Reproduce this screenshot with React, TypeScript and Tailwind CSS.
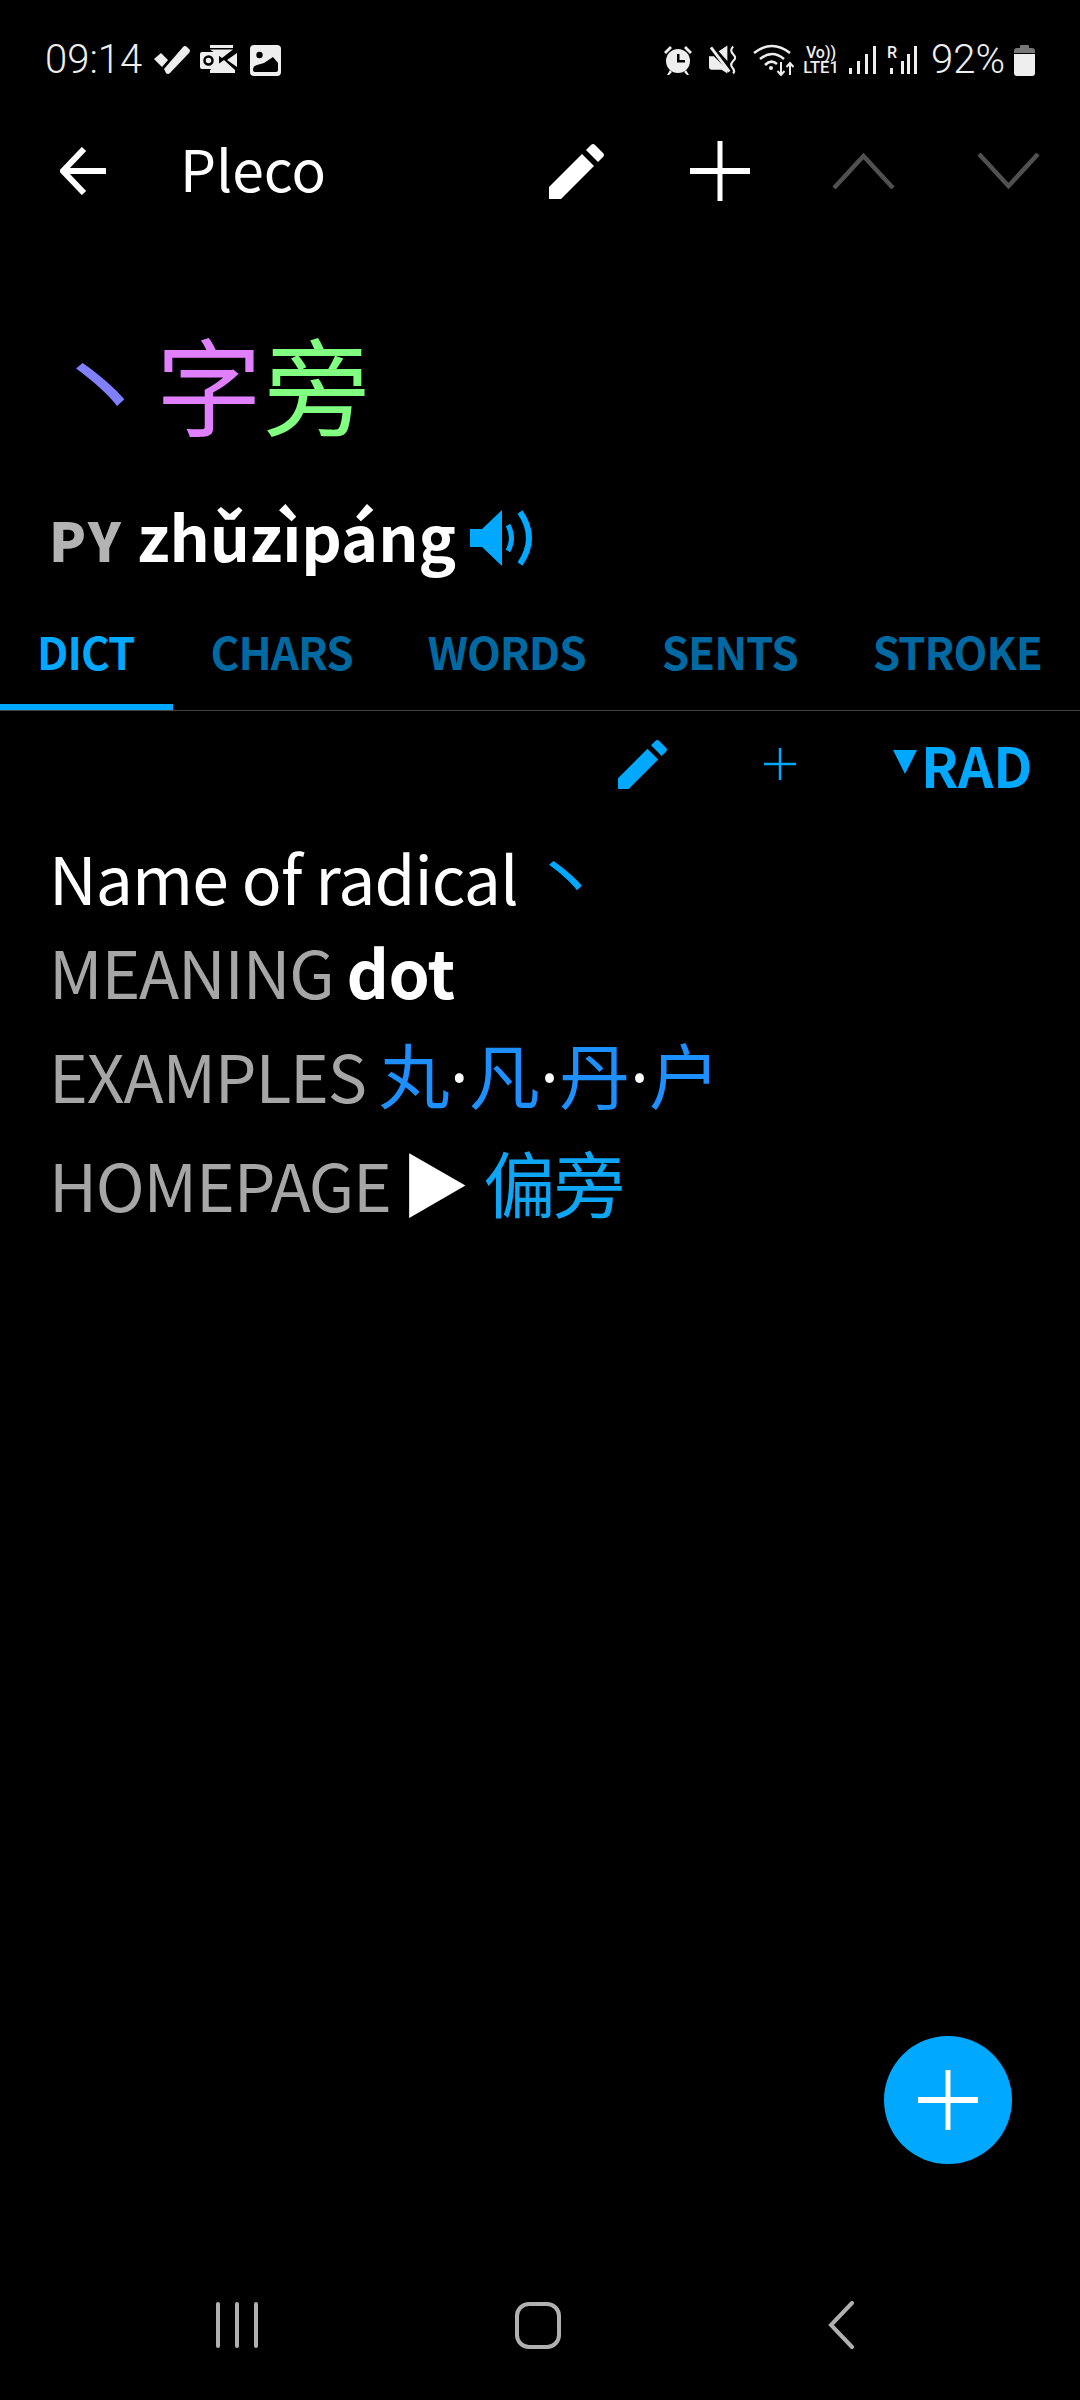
const sans = "font-['Noto_Sans_CJK_SC',sans-serif]";

const Pencil = ({ className }: { className: string }) => (
  <svg viewBox="0 0 56 56" className={className} fill="currentColor">
    <path d="M0 44 L33 11 L45 23 L12 56 L0 56 Z" />
    <path d="M37 7 L42 2 Q44 0 46 2 L54 10 Q56 12 54 14 L49 19 Z" />
  </svg>
);

const StatusLeft = () => (
  <div className="flex items-center">
    <span className="font-['Roboto',sans-serif] font-light text-[40px] leading-none text-[#eeeeee] w-[96px]">09:14</span>
    <svg viewBox="0 0 36 30" className="ml-[13px] w-[36px] h-[30px]" fill="#eeeeee">
      <path d="M0 14 L7 8 L14 15 L8 22 Z" />
      <path d="M10 24 L29 2 Q31 0 33 2 L36 5 Q36 7 35 8 L16 28 Q14 30 12 28 Z" />
    </svg>
    <svg viewBox="0 0 37 30" className="ml-[10px] w-[37px] h-[30px]" fill="#eeeeee">
      <path d="M10 0 H33 V3 H10 Z M10 4.5 H33 L22 13 Z M27 15 L37 8 V22 Z M10 25 L24 15 L35 25 V28 H10 Z" />
      <rect x="0" y="7" width="19" height="17" rx="2" />
      <circle cx="8.5" cy="15.5" r="4" fill="none" stroke="#000" strokeWidth="2.5" />
    </svg>
    <svg viewBox="0 0 31 31" className="ml-[13px] w-[31px] h-[31px]">
      <rect width="31" height="31" rx="4" fill="#eeeeee" />
      <circle cx="9.5" cy="10" r="3.2" fill="#000" />
      <path d="M3 25 Q3 21 7 20 L14 18 L23 12 L28 18 V25 Q28 27 26 27 H5 Q3 27 3 25 Z" fill="#000" />
    </svg>
  </div>
);

const StatusRight = () => (
  <div className="flex items-center">
    <svg viewBox="0 0 30 30" className="w-[30px] h-[30px]" fill="#eeeeee">
      <path d="M1 7 L7 1 L9 3 L3 9 Z M29 7 L23 1 L21 3 L27 9 Z M4 30 L7 25 L9 27 L6 30 Z M26 30 L23 25 L21 27 L24 30 Z" />
      <circle cx="15" cy="16" r="12" />
      <path d="M14 9 H16.5 V15 H22 V17.5 H14 Z" fill="#000" />
    </svg>
    <svg viewBox="0 0 30 30" className="ml-[16px] w-[29px] h-[30px]" fill="#eeeeee">
      <path d="M0 11 H5 L19 25 V29 L13 25 H3 Q0 25 0 22 Z M10 6 L19 0 V16 Z" />
      <path d="M2 2 L21 27" stroke="#eeeeee" strokeWidth="3" />
      <path d="M25 1 Q21 5 25 9 Q29 13 25 16 Q21 20 25 24 Q27 27 25 29" stroke="#eeeeee" strokeWidth="2.2" fill="none" />
    </svg>
    <svg viewBox="0 0 42 32" className="ml-[15px] w-[42px] h-[32px]" fill="none" stroke="#eeeeee" strokeWidth="2.6">
      <path d="M1 9 Q19 -5 37 9" />
      <path d="M7 15 Q19 5 31 15" />
      <path d="M12 21 Q18 15 24 20" />
      <circle cx="18" cy="24" r="2" fill="#eeeeee" stroke="none" />
      <path d="M28 18 V31 M24.5 27 L28 31 L31.5 27 M37 31 V19 M33.5 23 L37 19 L40.5 23" strokeWidth="2" />
    </svg>
    <div className="ml-[7px] w-[38px] flex flex-col items-center font-['Roboto',sans-serif] font-medium text-[#eeeeee] leading-none">
      <span className="text-[16px] h-[15px]">Vo))</span>
      <span className="text-[16.5px] h-[16px]">LTE1</span>
    </div>
    <svg viewBox="0 0 28 30" className="ml-[9px] w-[28px] h-[30px]" fill="#eeeeee">
      <rect x="0" y="23" width="3" height="6" />
      <rect x="8" y="16" width="3" height="13" />
      <rect x="16" y="9" width="3" height="20" />
      <rect x="24" y="1" width="3" height="28" />
    </svg>
    <div className="relative ml-[10px] w-[30px] h-[30px]">
      <svg viewBox="0 0 30 30" className="w-[30px] h-[30px]" fill="#eeeeee">
        <rect x="3" y="23" width="3" height="6" />
        <rect x="14" y="16" width="3" height="13" />
        <rect x="20" y="9" width="3" height="20" />
        <rect x="27" y="1" width="3" height="28" />
      </svg>
      <span className="absolute left-0 top-0 font-['Roboto',sans-serif] font-medium text-[16px] leading-none text-[#eeeeee]">R</span>
    </div>
    <span className="ml-[14px] w-[75px] font-['Roboto',sans-serif] font-light text-[40px] leading-none text-[#eeeeee]">92%</span>
    <svg viewBox="0 0 21 31" className="ml-[8px] w-[21px] h-[31px]" fill="#eeeeee">
      <path d="M7 0 H14 Q15 0 15 1 V3 H18 Q21 3 21 6 V8 H0 V6 Q0 3 3 3 H6 V1 Q6 0 7 0 Z" fill="#777777" />
      <path d="M0 9 H21 V28 Q21 31 18 31 H3 Q0 31 0 28 Z" />
    </svg>
  </div>
);

const Tab = ({ label, active, className }: { label: string; active?: boolean; className: string }) => (
  <span className={`${className} text-[44px] font-bold leading-none tracking-[-1px] ${active ? "text-[#00a8ff]" : "text-[#0069a1]"}`}>{label}</span>
);

const Dot = () => <span className="font-['Noto_Sans',sans-serif] text-white">·</span>;

export default function App() {
  return (
    <div className={`relative flex flex-col w-[1080px] h-[2400px] bg-black text-white overflow-hidden ${sans}`}>
      <div className="flex items-center justify-between h-[120px] pl-[45px] pr-[45px]">
        <StatusLeft />
        <StatusRight />
      </div>

      <div className="flex items-center h-[102px]">
        <svg viewBox="0 0 48 48" className="ml-[60px] w-[48px] h-[48px]" fill="none" stroke="#fff" strokeWidth="6">
          <path d="M46 24 H4 M24 2 L3 24 L24 46" />
        </svg>
        <span className="ml-[72px] mb-[8px] w-[150px] text-[57px] leading-none">Pleco</span>
        <Pencil className="ml-[219px] w-[56px] h-[56px] text-white" />
        <svg viewBox="0 0 60 60" className="ml-[85px] w-[60px] h-[60px]" stroke="#fff">
          <path d="M0 30 H60" strokeWidth="6" />
          <path d="M30 0 V60" strokeWidth="5" />
        </svg>
        <svg viewBox="0 0 63 36" className="ml-[82px] w-[63px] h-[36px]" fill="none" stroke="#505050" strokeWidth="4.5">
          <path d="M2 35 L31.5 3 L61 35" />
        </svg>
        <svg viewBox="0 0 63 36" className="ml-[82px] w-[63px] h-[36px]" fill="none" stroke="#505050" strokeWidth="4.5">
          <path d="M2 1 L31.5 33 L61 1" />
        </svg>
      </div>

      <div className="flex mt-[100px] pl-[48px] text-[106px] tracking-[2px] leading-[120px] h-[120px]">
        <span className="text-[#8080ff]">丶</span>
        <span className="text-[#e080ff]">字</span>
        <span className="text-[#80ff80]">旁</span>
      </div>

      <div className="flex items-baseline mt-[55px] pl-[49px] h-[76px] leading-[76px]">
        <span className="text-[54px] font-black tracking-[2.5px] text-[#b3b3b3]">PY</span>
        <span className="ml-[14px] text-[63px] font-bold">zhǔzìpáng</span>
        <svg viewBox="0 0 66 56" className="ml-[14px] mt-[6px] w-[66px] h-[56px] self-center" fill="#00a8ff">
          <path d="M0 19 H12 L32 0 V56 L12 37 H0 Z" />
          <path d="M38 15 Q45 28 38 41" fill="none" stroke="#00a8ff" strokeWidth="5" />
          <path d="M50 2 Q68 28 50 54" fill="none" stroke="#00a8ff" strokeWidth="6" />
        </svg>
      </div>

      <div className="flex items-center mt-[42px] h-[72px]">
        <Tab label="DICT" active className="ml-[37px]" />
        <Tab label="CHARS" className="ml-[76px]" />
        <Tab label="WORDS" className="ml-[75px]" />
        <Tab label="SENTS" className="ml-[76px]" />
        <Tab label="STROKE" className="ml-[75px]" />
      </div>
      <div className="w-[173px] h-[6px] mt-[17px] bg-[#00a8ff]" />
      <div className="h-[1px] bg-[#444444]" />

      <div className="flex items-center h-[76px] mt-[15px]">
        <Pencil className="ml-[618px] w-[50px] h-[50px] text-[#00a8ff]" />
        <svg viewBox="0 0 32 32" className="ml-[96px] w-[32px] h-[32px]" stroke="#00a8ff" strokeWidth="2.5">
          <path d="M0 16 H32 M16 0 V32" />
        </svg>
        <svg viewBox="0 0 24 24" className="ml-[97px] mb-[4px] w-[24px] h-[24px]" fill="#00a8ff">
          <path d="M0 0 H24 L12 24 Z" />
        </svg>
        <span className="ml-[4px] text-[55px] font-bold leading-none text-[#00a8ff]">RAD</span>
      </div>

      <div className="flex flex-col pl-[49px] mt-[18px] text-[66px] tracking-[-1.2px]">
        <div className="flex items-baseline h-[101px]">
          <span className="leading-[95px] tracking-[-0.9px]">Name of radical</span>
          <span className="ml-[12px] text-[72px] tracking-[0px] text-[#00a8ff]">丶</span>
        </div>
        <div className="flex items-baseline h-[96px] leading-[98px]">
          <span className="text-[#a6a6a6]">MEANING</span>
          <span className="ml-[13px] font-bold tracking-[-0.5px]">dot</span>
        </div>
        <div className="flex items-baseline h-[110px] leading-[110px]">
          <span className="text-[#a6a6a6]">EXAMPLES</span>
          <span className="ml-[13px] text-[71px] tracking-[0px] text-[#1e8fff]">丸<Dot />凡<Dot />丹<Dot />户</span>
        </div>
        <div className="flex items-baseline h-[108px] leading-[108px]">
          <span className="text-[#a6a6a6]">HOMEPAGE</span>
          <span className="ml-[10px] text-[69px]">▶</span>
          <span className="ml-[15px] text-[72px] tracking-[-2px] text-[#0ea5f5]">偏旁</span>
        </div>
      </div>

      <div className="absolute left-[884px] top-[2036px] w-[128px] h-[128px] rounded-full bg-[#00a8ff] flex items-center justify-center">
        <svg viewBox="0 0 60 60" className="w-[60px] h-[60px]" stroke="#fff">
          <path d="M0 30 H60" strokeWidth="6" />
          <path d="M30 0 V60" strokeWidth="5" />
        </svg>
      </div>

      <div className="mt-auto flex items-center h-[100px] mb-[25px]">
        <div className="ml-[216px] flex gap-[15px]">
          <div className="w-[4px] h-[46px] rounded-full bg-[#b0b0b0]" />
          <div className="w-[4px] h-[46px] rounded-full bg-[#b0b0b0]" />
          <div className="w-[4px] h-[46px] rounded-full bg-[#b0b0b0]" />
        </div>
        <div className="ml-[257px] w-[46px] h-[47px] rounded-[14px] border-[4px] border-[#b0b0b0]" />
        <svg viewBox="0 0 26 48" className="ml-[267px] w-[26px] h-[48px]" fill="none" stroke="#b0b0b0" strokeWidth="4" strokeLinecap="round">
          <path d="M24 2 L3 24 L24 46" />
        </svg>
      </div>
    </div>
  );
}
